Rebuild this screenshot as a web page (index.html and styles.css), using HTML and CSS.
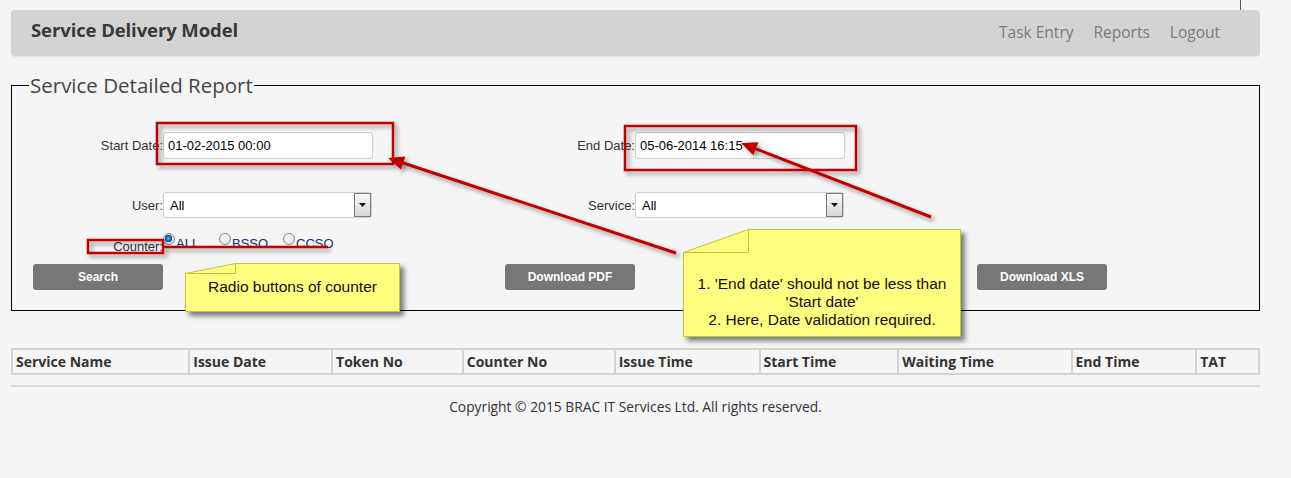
FILE: index.html
```html
<!DOCTYPE html>
<html lang="en">
<head>
<meta charset="utf-8">
<title>Service Detailed Report</title>
<link rel="stylesheet" href="styles.css">
</head>
<body>
<div class="top-tick"></div>
<div class="page">
  <header class="topbar">
    <div class="brand">Service Delivery Model</div>
    <nav class="nav">
      <a href="#">Task Entry</a>
      <a href="#">Reports</a>
      <a href="#">Logout</a>
    </nav>
  </header>

  <fieldset class="report">
    <legend>Service Detailed Report</legend>

    <div class="row row-dates">
      <label class="lbl">Start Date:</label>
      <input class="field" type="text" value="01-02-2015 00:00">
      <span></span>
      <label class="lbl">End Date:</label>
      <input class="field" type="text" value="05-06-2014 16:15">
    </div>

    <div class="row row-selects">
      <label class="lbl">User:</label>
      <div class="select"><span class="select-value">All</span><span class="select-arrow"><svg width="7" height="4" viewBox="0 0 7 4"><path d="M0 0H7L3.5 4Z" fill="#111"/></svg></span></div>
      <span></span>
      <label class="lbl">Service:</label>
      <div class="select"><span class="select-value">All</span><span class="select-arrow"><svg width="7" height="4" viewBox="0 0 7 4"><path d="M0 0H7L3.5 4Z" fill="#111"/></svg></span></div>
    </div>

    <div class="row row-radios">
      <label class="lbl lbl-counter">Counter:</label>
      <div class="radios">
        <label class="opt opt-all"><input type="radio" name="counter" checked><span>ALL</span></label>
        <label class="opt opt-bsso"><input type="radio" name="counter"><span>BSSO</span></label>
        <label class="opt"><input type="radio" name="counter"><span>CCSO</span></label>
      </div>
    </div>

    <div class="buttons">
      <button class="btn" type="button">Search</button>
      <button class="btn" type="button">Download PDF</button>
      <button class="btn" type="button">Download XLS</button>
    </div>
  </fieldset>

  <table class="grid">
    <thead>
      <tr>
        <th class="c1">Service Name</th>
        <th class="c2">Issue Date</th>
        <th class="c3">Token No</th>
        <th class="c4">Counter No</th>
        <th class="c5">Issue Time</th>
        <th class="c6">Start Time</th>
        <th class="c7">Waiting Time</th>
        <th class="c8">End Time</th>
        <th class="c9">TAT</th>
      </tr>
    </thead>
  </table>

  <hr class="rule">
  <footer class="footer">Copyright © 2015 BRAC IT Services Ltd. All rights reserved.</footer>
</div>

<div class="annotations">
  <svg class="ann-svg" width="1291" height="478" viewBox="0 0 1291 478">
    <defs>
      <filter id="sh" x="-20%" y="-20%" width="140%" height="160%">
        <feDropShadow dx="3" dy="3" stdDeviation="2" flood-color="#000" flood-opacity="0.4"/>
      </filter>
      <filter id="shc" x="-10%" y="-10%" width="130%" height="130%">
        <feDropShadow dx="4" dy="4" stdDeviation="2.5" flood-color="#000" flood-opacity="0.5"/>
      </filter>
    </defs>
    <g filter="url(#sh)" fill="none" stroke="#c00000" stroke-width="2.5">
      <rect x="157" y="123" width="236" height="41"/>
      <rect x="625" y="126" width="231" height="44"/>
      <rect x="88" y="240" width="75" height="13"/>
      <line x1="163" y1="247" x2="328" y2="247"/>
      <line x1="676" y1="253" x2="403.2" y2="163" stroke-width="3"/>
      <polygon points="388,158 405.4,156.4 401,169.6" fill="#c00000" stroke="none"/>
      <line x1="931" y1="217" x2="755.9" y2="148.8" stroke-width="3"/>
      <polygon points="741,143 758.4,142.3 753.4,155.3" fill="#c00000" stroke="none"/>
    </g>
    <g filter="url(#shc)" fill="#ffff80" stroke="#c2c23a" stroke-width="1">
      <path d="M185.5 273.5 L235.5 263.5 L399.5 263.5 L399.5 311.5 L185.5 311.5 Z"/>
      <path d="M683.5 252.5 L748.5 229.5 L960.5 229.5 L960.5 336.5 L683.5 336.5 Z"/>
    </g>
    <g fill="none" stroke="#c2c23a" stroke-width="1">
      <path d="M185.5 273.5 H235.5 V263.5"/>
      <path d="M683.5 252.5 H748.5 V229.5"/>
    </g>
  </svg>
  <div class="callout callout-radio">Radio buttons of counter</div>
  <div class="callout callout-date">1. 'End date' should not be less than<br>'Start date'<br>2. Here, Date validation required.</div>
</div>
</body>
</html>
```

FILE: styles.css
```css
html, body {
  margin: 0;
  padding: 0;
  background: #f5f5f5;
}

body {
  position: relative;
  width: 1291px;
  height: 478px;
  overflow: hidden;
  font-family: "Open Sans", Lato, "Liberation Sans", sans-serif;
  color: #333;
}

.top-tick {
  position: absolute;
  left: 1240px;
  top: 0;
  width: 1px;
  height: 10px;
  background: #555;
}

.page {
  width: 1249px;
  margin-left: 11px;
  padding-top: 10px;
}

/* header */
.topbar {
  height: 47px;
  box-sizing: border-box;
  background: #d3d3d3;
  border-radius: 4px;
  border-bottom: 1px solid #e6e6e6;
  display: flex;
  align-items: center;
  justify-content: space-between;
  padding: 0 40px 0 20px;
}

.brand {
  font-size: 18.5px;
  font-weight: 700;
  letter-spacing: -0.1px;
  color: #383838;
  margin-top: -7px;
}

.nav {
  display: flex;
  gap: 20px;
  font-size: 15.5px;
  margin-top: -3px;
}

.nav a {
  color: #7b7b7b;
  text-decoration: none;
}

/* fieldset */
.report {
  margin: 16px 0 0;
  padding: 0 0 20px;
  border: 1px solid #000;
  min-width: 0;
}

.report legend {
  margin-left: 17px;
  padding: 0 1px;
  font-size: 20.5px;
  line-height: 24px;
  color: #444;
}

.row {
  display: grid;
  grid-template-columns: 151px 210px 111px 151px 210px;
  align-items: center;
}

.row-dates {
  margin-top: 35px;
  height: 27px;
}

.row-selects {
  margin-top: 33px;
  height: 26px;
}

.row-radios {
  margin-top: 14px;
  height: 20px;
  align-items: start;
}

.lbl {
  font: 13px "Liberation Sans", Arial, sans-serif;
  color: #333;
  text-align: right;
}

.lbl-counter {
  align-self: end;
  margin-bottom: -2px;
}

.field {
  width: 210px;
  height: 27px;
  box-sizing: border-box;
  border: 1px solid #cfcfcf;
  border-radius: 3px;
  background: #fff;
  padding: 0 4px;
  font: 13px "Liberation Sans", Arial, sans-serif;
  color: #000;
  outline: none;
}

.select {
  width: 209px;
  height: 26px;
  box-sizing: border-box;
  border: 1px solid #cfcfcf;
  border-radius: 3px;
  background: #fff;
  display: flex;
  align-items: center;
  justify-content: space-between;
  font: 13px "Liberation Sans", Arial, sans-serif;
  color: #000;
}

.select-value {
  padding-left: 6px;
}

.select-arrow {
  width: 17px;
  height: 24px;
  box-sizing: border-box;
  border: 1px solid #7a7a7a;
  background: linear-gradient(#fafafa, #d6d6d6);
  display: flex;
  align-items: center;
  justify-content: center;
}

.radios {
  display: flex;
  align-items: flex-start;
  font: 13px "Liberation Sans", Arial, sans-serif;
  color: #1a2a6c;
}

.opt {
  display: flex;
  align-items: flex-start;
}

.opt-all { width: 56px; }
.opt-bsso { width: 64px; }

.opt span {
  margin-top: 4px;
}

.opt input {
  appearance: none;
  -webkit-appearance: none;
  width: 12px;
  height: 12px;
  margin: 1px 1px 0 0;
  border-radius: 50%;
  border: 1px solid #8c8c8c;
  background: radial-gradient(circle at 40% 35%, #ffffff, #d8d8d8);
}

.opt input:checked {
  background: radial-gradient(circle at 45% 45%, #5fb4ff 0, #1668b8 2.5px, #0b4a8c 3.5px, #e8e8e8 4px, #cfcfcf 100%);
}

.buttons {
  display: grid;
  grid-template-columns: repeat(3, 472px);
  padding-left: 21px;
  margin-top: 12px;
}

.btn {
  width: 130px;
  height: 26px;
  border: 0;
  border-radius: 3px;
  background: #777;
  color: #fff;
  font: bold 12px "Liberation Sans", Arial, sans-serif;
  padding: 0;
}

/* table */
.grid {
  width: 1249px;
  margin-top: 37px;
  border-collapse: collapse;
  border: 2px solid #d3d3d3;
  table-layout: fixed;
}

.grid th {
  height: 23px;
  border: 2px solid #d3d3d3;
  text-align: left;
  padding: 0 3px;
  font-size: 14px;
  font-weight: 700;
  color: #333;
}

.c1 { width: 167px; }
.c2 { width: 133px; }
.c3 { width: 121px; }
.c4 { width: 142px; }
.c5 { width: 135px; }
.c6 { width: 129px; }
.c7 { width: 163px; }
.c8 { width: 115px; }
.c9 { width: 54px; }

.rule {
  margin: 10px 0 0;
  border: 0;
  border-top: 2px solid #dadada;
}

.footer {
  text-align: center;
  font-size: 13.8px;
  color: #333;
  margin-top: 10px;
}

/* annotations overlay */
.annotations {
  position: absolute;
  left: 0;
  top: 0;
  width: 1291px;
  height: 478px;
  pointer-events: none;
}

.ann-svg {
  position: absolute;
  left: 0;
  top: 0;
}

.callout {
  position: absolute;
  font-family: "Liberation Sans", Arial, sans-serif;
  color: #1a0a0a;
  text-align: center;
}

.callout-radio {
  left: 185px;
  top: 278px;
  width: 215px;
  font-size: 15.5px;
  line-height: 18px;
}

.callout-date {
  left: 683px;
  top: 275px;
  width: 278px;
  font-size: 15.5px;
  line-height: 18px;
}
```
